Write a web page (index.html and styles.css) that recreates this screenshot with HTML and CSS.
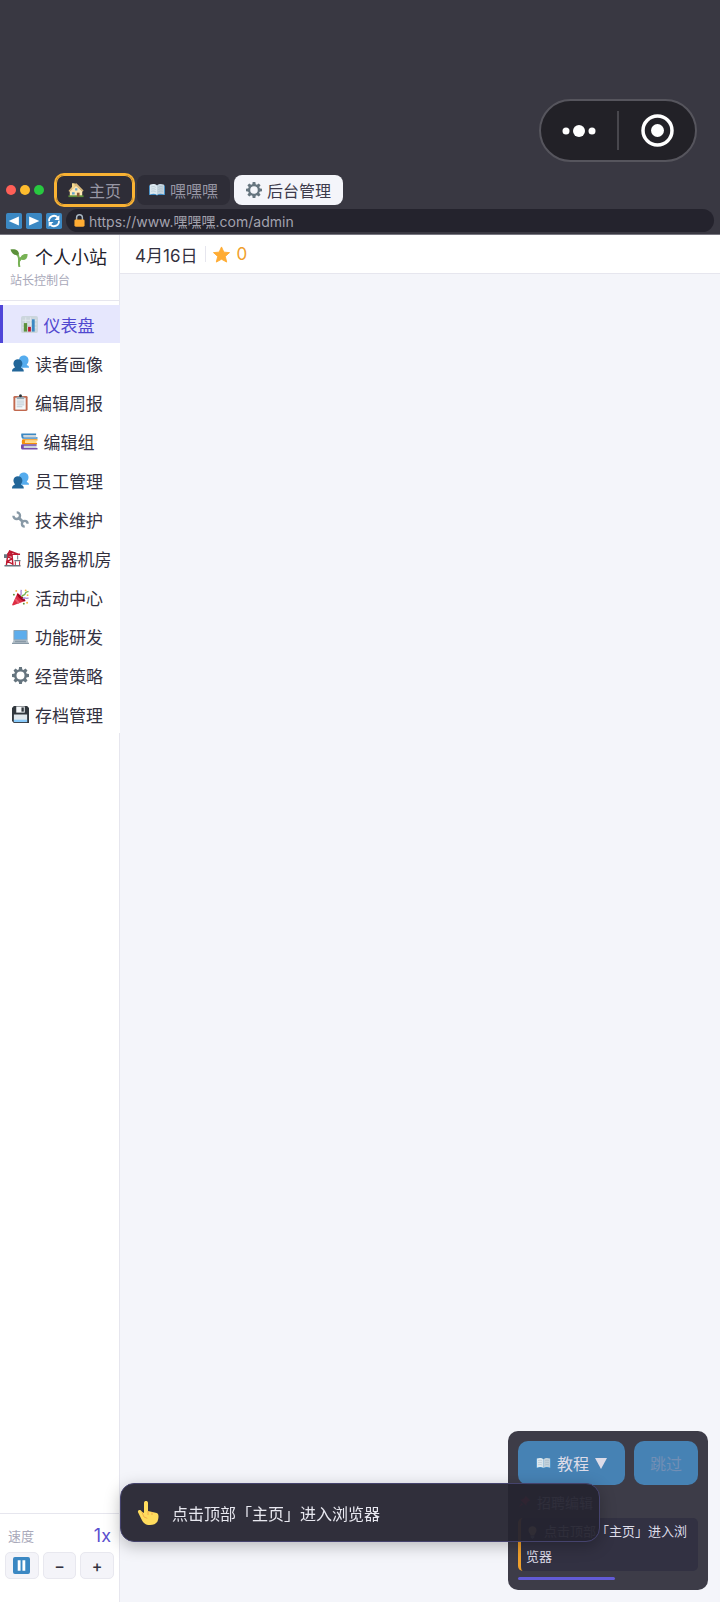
FILE: index.html
```html
<!DOCTYPE html>
<html lang="zh-CN">
<head>
  <meta charset="UTF-8" />
  <meta name="viewport" content="width=device-width, initial-scale=1.0"/>
  <title>个人小站</title>
  <link rel="stylesheet" href="styles.css">
</head>
<body>
  <!-- Icon set -->
  <svg class="sprite" aria-hidden="true">
    <symbol id="i-home" viewBox="0 0 36 36">
      <path fill="#ffe8b6" d="M4 33V20L17 6l15 14v13z"/>
      <path fill="#d9b97c" d="M1 20 15 4l4-1 16 16-2 3L18 9 4 22z"/>
      <path fill="#f4d98e" d="M9 3h6v8l-6 5z"/>
      <path fill="#5c913b" d="M1 30h34v4H1z"/>
      <path fill="#8a5a35" d="M20 24h6v9h-6z"/>
      <path fill="#66a4cc" d="M9 23h6v5H9zM16 14h5v5h-5z"/>
    </symbol>
    <symbol id="i-book" viewBox="0 0 36 36">
      <path fill="#3b88c3" d="M0 8h36v21H20l-2 2-2-2H0z"/>
      <path fill="#dce8ef" d="M2 6c6-2 12-2 16 2v21c-4-3-10-3-16-1z"/>
      <path fill="#c2d2dc" d="M34 6c-6-2-12-2-16 2v21c4-3 10-3 16-1z"/>
      <path stroke="#99aab5" fill="none" d="M5 11c4-1 7-1 10 1M5 16c4-1 7-1 10 1M5 21c4-1 7-1 10 1M31 11c-4-1-7-1-10 1M31 16c-4-1-7-1-10 1M31 21c-4-1-7-1-10 1"/>
    </symbol>
    <symbol id="i-gear" viewBox="0 0 36 36">
      <circle cx="18" cy="18" r="11" fill="none" stroke="#66757f" stroke-width="5"/>
      <g fill="#66757f">
        <path id="tooth" d="m14 7 1-7h6l1 7z"/>
        <use href="#tooth" transform="rotate(45 18 18)"/>
        <use href="#tooth" transform="rotate(90 18 18)"/>
        <use href="#tooth" transform="rotate(135 18 18)"/>
        <use href="#tooth" transform="rotate(180 18 18)"/>
        <use href="#tooth" transform="rotate(225 18 18)"/>
        <use href="#tooth" transform="rotate(270 18 18)"/>
        <use href="#tooth" transform="rotate(315 18 18)"/>
      </g>
    </symbol>
    <symbol id="i-prev" viewBox="0 0 36 36">
      <rect width="36" height="36" rx="4" fill="#3b88c3"/>
      <path fill="#fff" d="M29 8v20L6 18z"/>
    </symbol>
    <symbol id="i-next" viewBox="0 0 36 36">
      <rect width="36" height="36" rx="4" fill="#3b88c3"/>
      <path fill="#fff" d="M7 8v20l23-10z"/>
    </symbol>
    <symbol id="i-reload" viewBox="0 0 36 36">
      <rect width="36" height="36" rx="4" fill="#3b88c3"/>
      <path fill="none" stroke="#fff" stroke-width="4" d="M7 19A11 11 0 0 1 26 10M29 17A11 11 0 0 1 10 26"/>
      <path fill="#fff" d="M30 5v11H19zM6 31V20h11z"/>
    </symbol>
    <symbol id="i-lock" viewBox="0 0 36 36">
      <path fill="none" stroke="#aab8c2" stroke-width="4" d="M10 18v-8a8 8 0 0 1 16 0v8"/>
      <rect x="4" y="15" width="28" height="20" rx="4" fill="#ffac33"/>
    </symbol>
    <symbol id="i-sprout" viewBox="0 0 36 36">
      <path fill="none" stroke="#77b255" stroke-width="4" d="M19 36c-3-8 1-13-2-21-1-3-3-5-6-6M19 24c1-5 4-8 9-9"/>
      <path fill="#5c913b" d="M1 1c9-2 17 1 17 10C10 14 3 10 1 1z"/>
      <path fill="#77b255" d="M35 10c1 9-5 14-14 11 0-9 6-12 14-11z"/>
    </symbol>
    <symbol id="i-chart" viewBox="0 0 36 36">
      <rect width="36" height="36" rx="4" fill="#ccd6dd"/>
      <path stroke="#e1e8ed" stroke-width="2" d="M3 9h30M3 17h30M3 25h30M10 3v30M20 3v30"/>
      <path fill="#5c913b" d="M6 15h7v18H6z"/>
      <path fill="#be1931" d="M15 23h6v10h-6z"/>
      <path fill="#3b88c3" d="M23 7h6v26h-6z"/>
    </symbol>
    <symbol id="i-users" viewBox="0 0 36 36">
      <path fill="#55acee" d="M15 9c1-11 20-11 20 2 0 6-3 7-4 10 4 1 5 3 5 6H16z"/>
      <path fill="#226699" d="M3 18C3 6 22 6 22 18c0 5-3 6-3 9 4 1 6 3 6 8H0c0-5 2-7 6-8 0-3-3-4-3-9z"/>
    </symbol>
    <symbol id="i-clipboard" viewBox="0 0 36 36">
      <rect x="3" y="4" width="30" height="32" rx="3" fill="#c1694f"/>
      <path fill="#f5f8fa" d="M7 8h22v25H7z"/>
      <path fill="#99aab5" d="M10 6h5c0-7 6-7 6 0h5v5H10z"/>
      <circle cx="18" cy="4" r="3" fill="#292f33"/>
      <path stroke="#b8c6d0" stroke-width="2" d="M10 15h16M10 19h16M10 23h16M10 27h12"/>
    </symbol>
    <symbol id="i-books" viewBox="0 0 36 36">
      <path fill="#3b88c3" d="M1 1h31v3H6v5h29v3H4C0 12 0 1 1 1z"/>
      <path fill="#ccd6dd" d="M5 4h27v5H5zM6 26h27v6H6z"/>
      <path fill="#f4900c" d="M4 13h31v3H9v5h25v3H4c-3 0-3-11 0-11z"/>
      <path fill="#ffd983" d="M9 16h24v5H9z"/>
      <path fill="#744eaa" d="M2 24h31v3H6v5h29v3H3C-1 35-1 25 2 24z"/>
    </symbol>
    <symbol id="i-wrench" viewBox="0 0 36 36">
      <g fill="none" stroke="#8899a6">
        <path stroke-width="6" d="m13 13 11 11"/>
        <path stroke-width="5" d="M10 3a7 7 0 1 1-7 7M33 27a6 6 0 1 0-6 6"/>
      </g>
    </symbol>
    <symbol id="i-crane" viewBox="0 0 36 36">
      <path fill="none" stroke="#be1931" stroke-width="3" d="M5 33 8 9l4-7 5 8 2 23M8 9h26M12 2l18 7M8 14l9 5-10 5 12 6"/>
      <path fill="#be1931" d="M7 7h10v7H7z"/>
      <path fill="#66757f" d="M0 9h7v8H0zM1 32h34v3H1zM28 11h2v9h-2zM22 21h13v3H22z"/>
      <path fill="none" stroke="#be1931" stroke-width="2" d="M24 24v8m9-8v8"/>
    </symbol>
    <symbol id="i-party" viewBox="0 0 36 36">
      <path fill="#dd2e44" d="m12 8 17 17L2 35c-2 0-2-1-1-3z"/>
      <path fill="#a0041e" d="M11 10c4 0 19 12 17 16-4 2-20-12-17-16z"/>
      <path fill="#ea596e" d="m8 19 9 10-4 2-7-8z"/>
      <path fill="none" stroke="#aa8dd8" stroke-width="3" d="M18 13c4-4-1-6 2-11"/>
      <path fill="none" stroke="#77b255" stroke-width="3" d="M20 17c3-7 7-2 8-7s4-3 7-5"/>
      <path fill="none" stroke="#aa8dd8" stroke-width="3" d="M23 21c4-5 7 1 12-2"/>
      <g fill="#f4b53f"><circle cx="9" cy="4" r="2"/><circle cx="33" cy="13" r="2"/><circle cx="29" cy="3" r="2"/><circle cx="32" cy="29" r="2"/></g>
      <g fill="#5c913b"><circle cx="4" cy="12" r="2"/><circle cx="25" cy="31" r="2"/></g>
    </symbol>
    <symbol id="i-laptop" viewBox="0 0 36 36">
      <rect x="3" y="4" width="30" height="23" rx="2" fill="#8fa3b0"/>
      <path fill="#5dadec" d="M5 6h26v18H5z"/>
      <path fill="#b0bdc6" d="m4 25-4 8h36l-4-8z"/>
      <path fill="#8899a6" d="M7 27h22l1 3H6zM0 32h36v2H0z"/>
    </symbol>
    <symbol id="i-floppy" viewBox="0 0 36 36">
      <path fill="#31373d" d="M4 0h28l4 4v32H4l-4-4V4z"/>
      <path fill="#f5f8fa" d="M9 1h18v13H9z"/>
      <path fill="#31373d" d="M20 3h5v9h-5z"/>
      <path fill="#e1e8ed" d="M4 18h28v16H4z"/>
      <path fill="#88c9f9" d="M4 29h28v5H4z"/>
    </symbol>
    <symbol id="i-star" viewBox="0 0 36 36">
      <path fill="#ffac33" stroke="#ffac33" stroke-width="2" stroke-linejoin="round" d="m18 2 5 11 12 1-9 8 3 12-11-6-11 6 3-12-9-8 12-1z"/>
    </symbol>
    <symbol id="i-pause" viewBox="0 0 36 36">
      <rect width="36" height="36" rx="4" fill="#3b88c3"/>
      <path fill="#fff" d="M10 7h6v22h-6zM20 7h6v22h-6z"/>
    </symbol>
    <symbol id="i-finger" viewBox="0 0 36 36">
      <path fill="#ffdc5d" d="M12 18V3c0-4 6-4 6 0v12l13 3c4 1 3 9 1 13-2 3-6 5-11 5-7 0-10-3-13-9L3 17c-1-4 4-5 6-1z"/>
      <path fill="none" stroke="#ef9645" d="M18 15v6M24 17v4M9 17l3 7 5 2"/>
    </symbol>
    <symbol id="i-pin" viewBox="0 0 36 36">
      <path fill="#dd2e44" d="m21 2 13 13-5 2-5 6-1 7L6 13l7-1 6-5zM10 22l4 4L2 34z"/>
    </symbol>
    <symbol id="i-bulb" viewBox="0 0 36 36">
      <path fill="#ffd983" d="M29 12C29-3 7-3 7 12c0 7 5 9 6 14h10c1-5 6-7 6-14z"/>
      <path fill="#99aab5" d="M13 27h10v5l-5 4-5-4z"/>
    </symbol>
  </svg>

  <!-- Browser chrome -->
  <header class="browser">
    <div class="capsule">
      <button class="capsule-btn" aria-label="更多">
        <svg width="34" height="12" viewBox="0 0 34 12" fill="#fff"><circle cx="4" cy="6" r="3.500"/><circle cx="17" cy="6" r="6"/><circle cx="30" cy="6" r="3.500"/></svg>
      </button>
      <button class="capsule-btn" aria-label="关闭">
        <svg width="33" height="33" viewBox="0 0 33 33"><circle cx="16.500" cy="16.500" r="14.500" fill="none" stroke="#fff" stroke-width="3.500"/><circle cx="16.500" cy="16.500" r="6.500" fill="#fff"/></svg>
      </button>
    </div>

    <nav class="tab-row">
      <div class="lights"><span class="light red"></span><span class="light yellow"></span><span class="light green"></span></div>
      <div class="tabs">
        <button class="tab highlight"><svg class="icon"><use href="#i-home"/></svg>主页</button>
        <button class="tab"><svg class="icon"><use href="#i-book"/></svg>嘿嘿嘿</button>
        <button class="tab active"><svg class="icon"><use href="#i-gear"/></svg>后台管理</button>
      </div>
    </nav>

    <div class="url-row">
      <button class="nav-btn" aria-label="后退"><svg class="icon"><use href="#i-prev"/></svg></button>
      <button class="nav-btn" aria-label="前进"><svg class="icon"><use href="#i-next"/></svg></button>
      <button class="nav-btn" aria-label="刷新"><svg class="icon"><use href="#i-reload"/></svg></button>
      <label class="url">
        <svg class="icon"><use href="#i-lock"/></svg>
        <input type="text" aria-label="网址" value="https://www.嘿嘿嘿.com/admin">
      </label>
    </div>
  </header>

  <div class="layout">
    <!-- Sidebar -->
    <aside class="sidebar">
      <div class="brand">
        <h1><svg class="icon"><use href="#i-sprout"/></svg>个人小站</h1>
        <p>站长控制台</p>
      </div>
      <nav class="menu">
        <button class="menu-item active"><svg class="icon"><use href="#i-chart"/></svg>仪表盘</button>
        <button class="menu-item"><svg class="icon"><use href="#i-users"/></svg>读者画像</button>
        <button class="menu-item"><svg class="icon"><use href="#i-clipboard"/></svg>编辑周报</button>
        <button class="menu-item"><svg class="icon"><use href="#i-books"/></svg>编辑组</button>
        <button class="menu-item"><svg class="icon"><use href="#i-users"/></svg>员工管理</button>
        <button class="menu-item"><svg class="icon"><use href="#i-wrench"/></svg>技术维护</button>
        <button class="menu-item"><svg class="icon"><use href="#i-crane"/></svg>服务器机房</button>
        <button class="menu-item"><svg class="icon"><use href="#i-party"/></svg>活动中心</button>
        <button class="menu-item"><svg class="icon"><use href="#i-laptop"/></svg>功能研发</button>
        <button class="menu-item"><svg class="icon"><use href="#i-gear"/></svg>经营策略</button>
        <button class="menu-item"><svg class="icon"><use href="#i-floppy"/></svg>存档管理</button>
      </nav>
      <div class="speed">
        <div class="speed-head"><span>速度</span><strong>1x</strong></div>
        <div class="speed-btns">
          <button aria-label="暂停"><svg class="icon"><use href="#i-pause"/></svg></button>
          <button>−</button>
          <button>+</button>
        </div>
      </div>
    </aside>

    <!-- Main area -->
    <main class="main">
      <div class="status">
        <span class="date">4月16日</span>
        <span class="stars"><svg class="icon"><use href="#i-star"/></svg>0</span>
      </div>
    </main>
  </div>

  <!-- Tutorial panel -->
  <section class="guide">
    <div class="guide-btns">
      <button class="guide-toggle"><svg class="icon"><use href="#i-book"/></svg>教程 <svg class="caret" viewBox="0 0 12 12"><path fill="currentColor" d="M0 1h12L6 12z"/></svg></button>
      <button class="guide-skip">跳过</button>
    </div>
    <div class="guide-title"><svg class="icon"><use href="#i-pin"/></svg>招聘编辑</div>
    <p class="guide-tip"><svg class="icon"><use href="#i-bulb"/></svg>点击顶部「主页」进入浏览器</p>
    <div class="progress"><div class="progress-bar" style="width: 54%"></div></div>
  </section>

  <!-- Toast -->
  <div class="toast" role="status"><svg class="icon"><use href="#i-finger"/></svg>点击顶部「主页」进入浏览器</div>
</body>
</html>
```

FILE: styles.css
```css
* {
  box-sizing: border-box;
}

body {
  display: flex;
  flex-direction: column;
  min-height: 100vh;
  margin: 0;
  font-family: Inter, "Noto Sans CJK SC", sans-serif;
  font-size: 16px;
  color: #33313f;
  background: #f4f5fa;
}

button {
  display: flex;
  align-items: center;
  justify-content: center;
  padding: 0;
  border: none;
  font: inherit;
  color: inherit;
  background: none;
  cursor: pointer;
}

h1, p {
  margin: 0;
}

.sprite {
  position: absolute;
  width: 0;
  height: 0;
}

.icon {
  flex: none;
  width: 17px;
  height: 17px;
}

/* Browser chrome */
.browser {
  display: flex;
  flex-direction: column;
  padding: 99px 6px 2px;
  border-bottom: 1px solid #777680;
  background: #393842;
}

.capsule {
  display: flex;
  align-self: flex-end;
  width: 158px;
  height: 63px;
  margin: 0 17px 13px 0;
  padding: 10px 0;
  border: 2px solid #56555d;
  border-radius: 32px;
  background: #222127;
}

.capsule-btn {
  flex: 1;
}

.capsule-btn + .capsule-btn {
  border-left: 2px solid #48474d;
}

.tab-row {
  display: flex;
  align-items: center;
  gap: 12px;
}

.lights, .tabs {
  display: flex;
  gap: 4px;
}

.light {
  width: 10px;
  height: 10px;
  border-radius: 50%;
}

.red {
  background: #ff5f57;
}

.yellow {
  background: #febc2e;
}

.green {
  background: #28c840;
}

.tab {
  gap: 5px;
  height: 30px;
  padding: 0 12px;
  border-radius: 8px;
  color: #9897a5;
  background: #2e2d37;
}

.tab .icon {
  width: 16px;
  height: 16px;
}

.tab.active {
  color: #3c3a4b;
  background: #f4f5fa;
}

.tab.highlight {
  box-shadow: inset 0 0 0 1px #f9b233, 0 0 0 2px #f9b233;
}

.url-row {
  display: flex;
  align-items: center;
  gap: 4px;
  margin-top: 4px;
}

.nav-btn .icon {
  width: 16px;
  height: 16px;
}

.url {
  display: flex;
  flex: 1;
  align-items: center;
  gap: 3px;
  height: 23px;
  padding: 0 7px;
  border-radius: 12px;
  background: #24232d;
}

.url .icon {
  width: 13px;
  height: 13px;
}

.url input {
  flex: 1;
  min-width: 0;
  height: 23px;
  padding: 0;
  border: none;
  outline: none;
  font: inherit;
  font-size: 14px;
  color: #a3a2ae;
  background: none;
}

/* Sidebar */
.layout {
  display: flex;
  flex: 1;
}

.sidebar {
  display: flex;
  flex-direction: column;
  flex: none;
  width: 120px;
  border-right: 1px solid #e6e6ee;
  background: #fff;
}

.brand {
  padding: 10px 0 9px 10px;
  border-bottom: 1px solid #e6e6ee;
}

.brand h1 {
  display: flex;
  align-items: center;
  gap: 7px;
  font-size: 18px;
  font-weight: 400;
  line-height: 26px;
  color: #22212b;
}

.brand p {
  font-size: 12px;
  line-height: 20px;
  color: #a9a9ba;
}

.brand .icon {
  width: 18px;
  height: 18px;
}

.menu {
  display: flex;
  flex-direction: column;
  gap: 1px;
  margin: 4px -1px 0 0;
  background: #fff;
}

.menu-item {
  gap: 6px;
  height: 38px;
  padding-right: 8px;
  border-left: 3px solid transparent;
  font-size: 17px;
}

.menu-item.active {
  border-color: #4f46d8;
  color: #5048cf;
  background: #e6e7fd;
}

.speed {
  margin-top: auto;
  padding: 4px 5px 23px;
  border-top: 1px solid #e6e6ee;
}

.speed-head {
  display: flex;
  align-items: center;
  justify-content: space-between;
  height: 34px;
  padding: 0 3px;
  font-size: 13px;
  color: #a9a9ba;
}

.speed-head strong {
  font-size: 18px;
  font-weight: 400;
  color: #5b50cf;
}

.speed-btns {
  display: flex;
  gap: 4px;
}

.speed-btns button {
  flex: 1;
  height: 27px;
  border: 1px solid #e8e8ef;
  border-radius: 5px;
  font-weight: 500;
  background: #f4f4f9;
}

/* Main area */
.main {
  flex: 1;
}

.status {
  display: flex;
  align-items: center;
  gap: 8px;
  height: 39px;
  padding: 0 15px;
  border-bottom: 1px solid #e6e6ee;
  font-size: 17px;
  background: #fff;
}

.stars {
  display: flex;
  align-items: center;
  gap: 6px;
  height: 16px;
  padding-left: 7px;
  border-left: 1px solid #e6e6ee;
  color: #f0a02c;
}

/* Tutorial panel */
.guide {
  position: fixed;
  right: 12px;
  bottom: 12px;
  width: 200px;
  padding: 10px;
  border-radius: 10px;
  color: #dddce8;
  background: #3d3c48;
}

.guide-btns {
  display: flex;
  gap: 9px;
}

.guide-btns button {
  height: 44px;
  border-radius: 10px;
  background: #4682b4;
}

.guide-toggle {
  flex: 5;
  gap: 6px;
}

.guide-toggle .icon {
  width: 15px;
  height: 15px;
}

.guide-btns .guide-skip {
  flex: 3;
  color: #728fb5;
}

.caret {
  width: 12px;
  height: 12px;
}

.guide-title {
  display: flex;
  align-items: center;
  gap: 6px;
  height: 33px;
  font-size: 14px;
}

.guide-title .icon, .guide-tip .icon {
  width: 13px;
  height: 13px;
}

.guide-tip {
  padding: 1px 6px 2px 5px;
  border-left: 3px solid #f0a02c;
  border-radius: 5px;
  font-size: 13px;
  line-height: 25px;
  background: #323142;
}

.guide-tip .icon {
  margin-right: 5px;
  vertical-align: middle;
}

.progress {
  height: 3px;
  margin-top: 6px;
}

.progress-bar {
  height: 3px;
  border-radius: 2px;
  background: #625bd6;
}

/* Toast */
.toast {
  position: fixed;
  right: 120px;
  bottom: 60px;
  left: 120px;
  display: flex;
  align-items: center;
  gap: 12px;
  height: 59px;
  padding: 0 15px;
  border: 1px solid #45436d;
  border-radius: 14px;
  color: #e8e8f0;
  background: rgba(37, 36, 48, 0.95);
  box-shadow: 0 4px 16px rgba(0, 0, 0, 0.25);
}

.toast .icon {
  width: 24px;
  height: 24px;
}
```
